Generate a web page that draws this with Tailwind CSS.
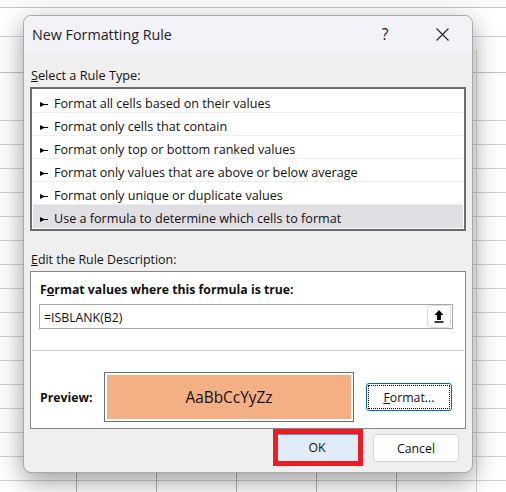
<!DOCTYPE html>
<html><head><meta charset="utf-8"><script src="https://cdn.jsdelivr.net/npm/@tailwindcss/browser@4"></script></head>
<body class="m-0 overflow-hidden">
<div class="relative w-[506px] h-[492px] overflow-hidden bg-white font-['Open_Sans','Noto_Sans',sans-serif] text-[12.3px] text-[#111]">
  <!-- sheet -->
  <div class="flex flex-col bg-[#fbfbfb]">
    <div class="h-[8px] border-b border-[#c9c9c9] shrink-0"></div>
    <div class="h-[29px] border-b border-[#d2d2d2] bg-white shrink-0"></div>
    <div class="h-[36px] border-b border-[#c4c4c4] bg-white shrink-0"></div>
    <div class="h-[48px] border-b border-[#d2d2d2] bg-white shrink-0"></div>
    <div class="h-[24px] border-b border-[#d2d2d2] bg-white shrink-0"></div>
    <div class="h-[24px] border-b border-[#d2d2d2] bg-white shrink-0"></div>
    <div class="h-[24px] border-b border-[#d2d2d2] bg-white shrink-0"></div>
    <div class="h-[24px] border-b border-[#d2d2d2] bg-white shrink-0"></div>
    <div class="h-[24px] border-b border-[#d2d2d2] bg-white shrink-0"></div>
    <div class="h-[24px] border-b border-[#d2d2d2] bg-white shrink-0"></div>
    <div class="h-[24px] border-b border-[#d2d2d2] bg-white shrink-0"></div>
    <div class="h-[24px] border-b border-[#d2d2d2] bg-white shrink-0"></div>
    <div class="h-[24px] border-b border-[#d2d2d2] bg-white shrink-0"></div>
    <div class="h-[24px] border-b border-[#d2d2d2] bg-white shrink-0"></div>
    <div class="h-[24px] border-b border-[#d2d2d2] bg-white shrink-0"></div>
    <div class="h-[24px] border-b border-[#d2d2d2] bg-white shrink-0"></div>
    <div class="h-[24px] border-b border-[#d2d2d2] bg-white shrink-0"></div>
    <div class="h-[24px] border-b border-[#d2d2d2] bg-white shrink-0"></div>
    <div class="h-[24px] border-b border-[#d2d2d2] bg-white shrink-0"></div>
  </div>
  <!-- column lines -->
  <div class="absolute left-[76px] top-[460px] w-px h-[32px] bg-[#b4b4b4]"></div>
  <div class="absolute left-[156px] top-[460px] w-px h-[32px] bg-[#b4b4b4]"></div>
  <div class="absolute left-[236px] top-[460px] w-px h-[32px] bg-[#b4b4b4]"></div>
  <div class="absolute left-[316px] top-[460px] w-px h-[32px] bg-[#b4b4b4]"></div>
  <div class="absolute left-[396px] top-[460px] w-px h-[32px] bg-[#b4b4b4]"></div>
  <div class="absolute left-[476px] top-[50px] w-px h-[442px] bg-[#d2d2d2]"></div>
  <!-- dialog -->
  <div class="absolute left-[23px] top-[15px] w-[450px] h-[458px] rounded-[8px] border border-[#a9a9a9] bg-[#efefef] shadow-[0_8px_26px_rgba(0,0,0,0.4)] overflow-hidden flex flex-col">
    <div class="h-[37px] shrink-0 bg-[#f3f2f8] flex items-center pl-[8px] text-[14.3px] text-[#222]">
      <span class="flex-1">New Formatting Rule</span>
      <span class="w-[16px] text-center text-[15.5px] mr-[43px]">?</span>
      <svg class="w-[13px] h-[13px] mr-[23px]" viewBox="0 0 13 13"><path d="M0.5 0.5 L12.5 12.5 M12.5 0.5 L0.5 12.5" stroke="#222" stroke-width="1.1" fill="none"/></svg>
    </div>
    <div class="flex-1 flex flex-col px-[6px]">
      <div class="mt-[13px] h-[19px] leading-[19px] pl-[1px] text-[12.7px]"><span class="underline">S</span>elect a Rule Type:</div>
      <div class="mt-[2px] h-[144px] w-[436px] border-2 border-[#6d6d6d] bg-white p-[1px] flex flex-col text-[12.6px]">
        <div class="h-[23px] flex items-center border-b border-[#eee] pl-[7px] pt-[6px]"><svg class="w-[8px] h-[5px] mr-[6px]" viewBox="0 0 8 5"><path d="M0 0 L4 2 H8 V3 H4 L0 5 Z" fill="#000"/></svg><span>Format all cells based on their values</span></div>
        <div class="h-[23px] flex items-center border-b border-[#eee] pl-[7px] pt-[6px]"><svg class="w-[8px] h-[5px] mr-[6px]" viewBox="0 0 8 5"><path d="M0 0 L4 2 H8 V3 H4 L0 5 Z" fill="#000"/></svg><span>Format only cells that contain</span></div>
        <div class="h-[23px] flex items-center border-b border-[#eee] pl-[7px] pt-[6px]"><svg class="w-[8px] h-[5px] mr-[6px]" viewBox="0 0 8 5"><path d="M0 0 L4 2 H8 V3 H4 L0 5 Z" fill="#000"/></svg><span>Format only top or bottom ranked values</span></div>
        <div class="h-[23px] flex items-center border-b border-[#eee] pl-[7px] pt-[6px]"><svg class="w-[8px] h-[5px] mr-[6px]" viewBox="0 0 8 5"><path d="M0 0 L4 2 H8 V3 H4 L0 5 Z" fill="#000"/></svg><span>Format only values that are above or below average</span></div>
        <div class="h-[23px] flex items-center border-b border-[#eee] pl-[7px] pt-[6px]"><svg class="w-[8px] h-[5px] mr-[6px]" viewBox="0 0 8 5"><path d="M0 0 L4 2 H8 V3 H4 L0 5 Z" fill="#000"/></svg><span>Format only unique or duplicate values</span></div>
        <div class="h-[23px] flex items-center bg-[#e0e0e4] pl-[7px] pt-[6px]"><svg class="w-[8px] h-[5px] mr-[6px]" viewBox="0 0 8 5"><path d="M0 0 L4 2 H8 V3 H4 L0 5 Z" fill="#000"/></svg><span>Use a formula to determine which cells to format</span></div>
      </div>
      <div class="mt-[19px] h-[19px] leading-[19px] pl-[1px] text-[12.4px]"><span class="underline">E</span>dit the Rule Description:</div>
      <div class="mt-[2px] w-[436px] h-[158px] border border-[#85878a] bg-white flex flex-col">
        <div class="mt-[9px] pl-[9px] font-bold h-[18px] leading-[18px] text-[12.25px]">F<span class="underline">o</span>rmat values where this formula is true:</div>
        <div class="mt-[5px] ml-[8px] w-[414px] h-[25px] shrink-0 border border-[#a8a8a8] flex items-center justify-between pl-[4px] pr-[1px]">
          <span class="pt-[3px]">=ISBLANK(B2)</span>
          <span class="w-[24px] h-[23px] rounded-[4px] border border-[#dcdcdc] bg-white flex items-center justify-center">
            <svg class="w-[10px] h-[13px]" viewBox="0 0 10 13"><path d="M5 0 L9.5 5 H6.9 V10 H3.1 V5 H0.5 Z M0.5 11.2 H9.5 V12.8 H0.5 Z" fill="#000"/></svg>
          </span>
        </div>
        <div class="mt-[21px] mx-[1px] h-px shrink-0 bg-[#c8c8c8]"></div>
        <div class="mt-[21px] flex items-center pl-[9px]">
          <span class="font-bold w-[64px] pt-[2px]">Preview:</span>
          <div class="w-[250px] h-[50px] border border-[#6e6e6e] bg-white p-[2px]"><div class="h-full bg-[#f4b084] flex items-center justify-center text-[15.4px]"><span class="pt-[1px]">AaBbCcYyZz</span></div></div>
          <div class="ml-[12px] w-[86px] h-[28px] rounded-[3px] border border-[#0067c0] bg-white p-[1px]"><div class="h-full border border-dotted border-black flex items-center justify-center"><span class="pt-[2px]"><span class="underline">F</span>ormat...</span></div></div>
        </div>
      </div>
      <div class="flex justify-end gap-[10px] w-[429px]">
        <div class="w-[90px] h-[37px] border-[5px] border-[#ed1c24] bg-[#e0edf9] shadow-[inset_0_1px_0_#4a9ad8] flex items-center justify-center"><span class="pt-[1px] -ml-[2px]">OK</span></div>
        <div class="w-[86px] h-[28px] mt-[5px] rounded-[4px] border border-[#d5d5d5] bg-[#fdfdfd] flex items-center justify-center"><span class="pt-[2px]">Cancel</span></div>
      </div>
    </div>
  </div>
</div>
</body></html>
